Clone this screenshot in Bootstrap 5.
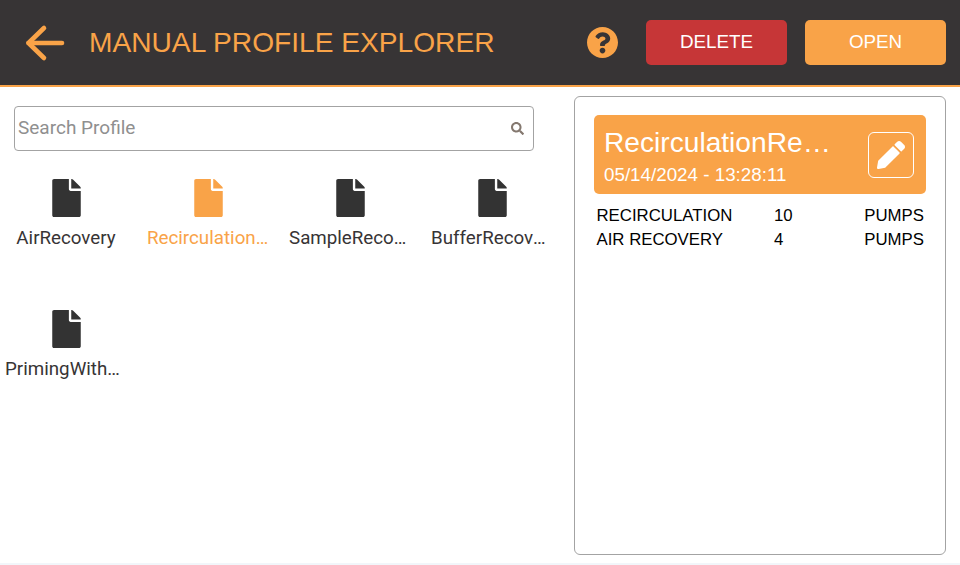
<!DOCTYPE html>
<html lang="en">
<head>
<meta charset="utf-8">
<title>Manual Profile Explorer</title>
<link href="https://cdn.jsdelivr.net/npm/bootstrap@5.3.0/dist/css/bootstrap.min.css" rel="stylesheet">
<style>
html,body{height:565px;overflow:hidden;background:#fff}
body{font-family:"Liberation Sans",Arial,sans-serif;color:#000;position:relative}
.app-head{height:87px;background:#373435;border-bottom:2px solid #f9a348;padding:0 14px 0 25px}
.back-ico{width:40px;height:40px;display:block;margin-top:-1px}
.head-title{font-size:28.15px;line-height:34px;color:#f9a348;margin:0 0 0 24px;font-weight:400}
.help-ico{width:31px;height:31px;display:block;fill:#f9a348;margin:0 28px 0 0}
.act-btn{width:141px;height:45px;border:0;border-radius:5px;color:#fff;font-size:18.8px;padding:0}
.act-del{background:#c63637;margin-right:18px}
.act-open{background:#f9a348}
.work{height:468px}
.left-pane{width:574px;padding:19px 40px 0 14px}
.search-wrap{height:45px;border:1px solid #a3a3a3;border-radius:4px;padding:0 9px 0 3px}
.search-input{border:0;outline:0;width:100%;font-family:Roboto,sans-serif;font-size:19px;color:#333;padding:0;background:transparent}
.search-input::placeholder{color:#8f8f8f;opacity:1}
.search-ico{width:13px;height:13px;fill:#84786f;flex:none}
.file-grid{display:grid;grid-template-columns:repeat(4,142px);grid-auto-rows:131px;margin:28px 0 0 -19px;width:568px}
.file-item{text-align:center;font-family:Roboto,sans-serif;font-size:18.75px;line-height:22px;color:#373435;padding:0 5px;min-width:0}
.file-ico{width:29px;height:38px;display:block;margin:0 auto 10px;fill:#333}
.file-name{display:block;white-space:nowrap;overflow:hidden;text-overflow:ellipsis;width:122px;margin:0 auto}
.file-on{color:#f9a348}
.file-on .file-ico{fill:#f9a348}
.right-pane{width:372px;height:459px;margin-top:9px;border:1px solid #a3a3a3;border-radius:6px;padding:18px 19px 0}
.sel-card{height:79px;background:#f9a348;border-radius:5px;color:#fff;padding:0 12px 0 10px}
.sel-name{font-size:28.15px;line-height:32px;width:232px;white-space:nowrap;overflow:hidden;text-overflow:ellipsis}
.sel-date{font-size:18.8px;line-height:22px;margin-top:5px}
.sel-text{margin-top:3px}
.edit-box{width:46px;height:46px;border:1px solid #fff;border-radius:6px;margin-top:1px}
.edit-box svg{width:28px;height:28px;fill:#fff}
.pump-list{margin-top:10px;padding:0 2px 0 2.5px;font-size:16.8px;line-height:24px}
.pump-row{display:grid;grid-template-columns:177.5px 1fr auto}
.foot-strip{position:absolute;left:0;right:0;bottom:0;height:2px;background:#f2f6fa}
</style>
</head>
<body>
<header class="app-head d-flex align-items-center">
  <svg class="back-ico" viewBox="0 0 40 40" fill="none" stroke="#f9a348" stroke-width="4.6" stroke-linecap="round" stroke-linejoin="round"><path d="M3.5 21H37"/><path d="M19 6 3.5 21 19 36"/></svg>
  <h1 class="head-title">MANUAL PROFILE EXPLORER</h1>
  <svg class="help-ico ms-auto" viewBox="8 8 496 496"><path d="M504 256c0 136.997-111.043 248-248 248S8 392.997 8 256C8 119.083 119.043 8 256 8s248 111.083 248 248zM262.655 90c-54.497 0-89.255 22.957-116.549 63.758-3.536 5.286-2.353 12.415 2.715 16.258l34.699 26.31c5.205 3.947 12.621 3.008 16.665-2.122 17.864-22.658 30.113-35.797 57.303-35.797 20.429 0 45.698 13.148 45.698 32.958 0 14.976-12.363 22.667-32.534 33.976C247.128 238.528 216 254.941 216 296v4c0 6.627 5.373 12 12 12h56c6.627 0 12-5.373 12-12v-1.333c0-28.462 83.186-29.647 83.186-106.667 0-58.002-60.165-102-116.531-102zM256 338c-25.365 0-46 20.635-46 46 0 25.364 20.635 46 46 46s46-20.636 46-46c0-25.365-20.635-46-46-46z"/></svg>
  <button type="button" class="act-btn act-del">DELETE</button>
  <button type="button" class="act-btn act-open">OPEN</button>
</header>
<main class="work d-flex">
  <section class="left-pane">
    <div class="search-wrap d-flex align-items-center">
      <input class="search-input" type="text" placeholder="Search Profile" aria-label="Search Profile">
      <svg class="search-ico" viewBox="0 0 512 512"><path d="M505 442.7L405.3 343c-4.5-4.5-10.6-7-17-7H372c27.6-35.3 44-79.7 44-128C416 93.1 322.9 0 208 0S0 93.1 0 208s93.1 208 208 208c48.3 0 92.7-16.4 128-44v16.3c0 6.4 2.5 12.5 7 17l99.7 99.7c9.4 9.4 24.6 9.4 33.9 0l28.3-28.3c9.4-9.4 9.4-24.6.1-34zM208 336c-70.7 0-128-57.2-128-128 0-70.7 57.2-128 128-128 70.7 0 128 57.2 128 128 0 70.7-57.2 128-128 128z"/></svg>
    </div>
    <div class="file-grid">
      <div class="file-item"><svg class="file-ico" viewBox="0 0 384 512"><path id="fp" d="M224 136V0H24C10.7 0 0 10.7 0 24v464c0 13.3 10.7 24 24 24h336c13.3 0 24-10.7 24-24V160H248c-13.2 0-24-10.8-24-24zm160-14.1v6.1H256V0h6.1c6.4 0 12.5 2.5 17 7l97.9 98c4.5 4.5 7 10.6 7 16.9z"/></svg><span class="file-name">AirRecovery</span></div>
      <div class="file-item file-on"><svg class="file-ico" viewBox="0 0 384 512"><use href="#fp"/></svg><span class="file-name">RecirculationRecovery</span></div>
      <div class="file-item"><svg class="file-ico" viewBox="0 0 384 512"><use href="#fp"/></svg><span class="file-name">SampleRecovery</span></div>
      <div class="file-item"><svg class="file-ico" viewBox="0 0 384 512"><use href="#fp"/></svg><span class="file-name">BufferRecovery</span></div>
      <div class="file-item"><svg class="file-ico" viewBox="0 0 384 512"><use href="#fp"/></svg><span class="file-name">PrimingWithAir</span></div>
    </div>
  </section>
  <aside class="right-pane">
    <div class="sel-card d-flex justify-content-between align-items-center">
      <div class="sel-text">
        <div class="sel-name">RecirculationRecovery</div>
        <div class="sel-date">05/14/2024 - 13:28:11</div>
      </div>
      <div class="edit-box d-flex align-items-center justify-content-center">
        <svg viewBox="0 0 512 512"><path d="M497.9 142.1l-46.1 46.1c-4.7 4.7-12.3 4.7-17 0l-111-111c-4.7-4.7-4.7-12.3 0-17l46.1-46.1c18.7-18.7 49.1-18.7 67.9 0l60.1 60.1c18.8 18.7 18.8 49.1 0 67.9zM284.2 99.8L21.6 362.4.4 483.9c-2.9 16.4 11.4 30.6 27.8 27.8l121.5-21.3 262.6-262.6c4.7-4.7 4.7-12.3 0-17l-111-111c-4.8-4.7-12.4-4.7-17.1 0z"/></svg>
      </div>
    </div>
    <div class="pump-list">
      <div class="pump-row"><span>RECIRCULATION</span><span>10</span><span>PUMPS</span></div>
      <div class="pump-row"><span>AIR RECOVERY</span><span>4</span><span>PUMPS</span></div>
    </div>
  </aside>
</main>
<div class="foot-strip"></div>
<script src="https://cdn.jsdelivr.net/npm/bootstrap@5.3.0/dist/js/bootstrap.bundle.min.js"></script>
</body>
</html>
